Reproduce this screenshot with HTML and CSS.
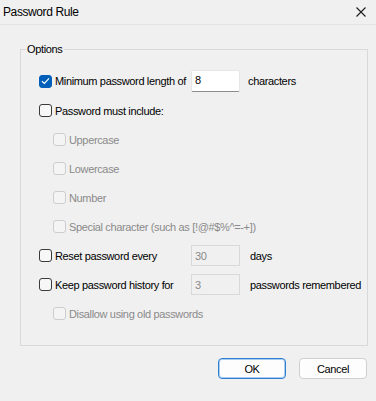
FILE: index.html
```html
<!DOCTYPE html>
<html>
<head>
<meta charset="utf-8">
<link rel="stylesheet" href="styles.css">
</head>
<body>
<div class="window">
  <div class="titlebar">
    <span class="title">Password Rule</span>
    <svg class="close" width="10" height="10" viewBox="0 0 10 10"><path d="M0.5 0.5 L9.5 9.5 M9.5 0.5 L0.5 9.5" stroke="#1b1b1b" stroke-width="1.1" fill="none"/></svg>
  </div>
  <fieldset class="group">
    <legend class="legend">Options</legend>
    <div class="rows">
      <div class="row row-first">
        <div class="label-col">
          <span class="box checked"><svg width="9" height="8" viewBox="0 0 9 8"><path d="M1 4.2 L3.4 6.4 L8 1.4" stroke="#fff" stroke-width="1.2" fill="none"/></svg></span>
          <span class="text">Minimum password length of</span>
        </div>
        <div class="edit edit-active">8</div>
        <span class="text after">characters</span>
      </div>
      <div class="row">
        <span class="box"></span>
        <span class="text">Password must include:</span>
      </div>
      <div class="row sub disabled">
        <span class="box"></span>
        <span class="text">Uppercase</span>
      </div>
      <div class="row sub disabled">
        <span class="box"></span>
        <span class="text">Lowercase</span>
      </div>
      <div class="row sub disabled">
        <span class="box"></span>
        <span class="text">Number</span>
      </div>
      <div class="row sub disabled">
        <span class="box"></span>
        <span class="text">Special character (such as [!@#$%^=-+])</span>
      </div>
      <div class="row">
        <div class="label-col">
          <span class="box"></span>
          <span class="text">Reset password every</span>
        </div>
        <div class="edit edit-disabled">30</div>
        <span class="text after2">days</span>
      </div>
      <div class="row">
        <div class="label-col">
          <span class="box"></span>
          <span class="text">Keep password history for</span>
        </div>
        <div class="edit edit-disabled">3</div>
        <span class="text after2">passwords remembered</span>
      </div>
      <div class="row sub disabled">
        <span class="box"></span>
        <span class="text">Disallow using old passwords</span>
      </div>
    </div>
  </fieldset>
  <div class="buttons">
    <div class="btn btn-default">OK</div>
    <div class="btn">Cancel</div>
  </div>
</div>
</body>
</html>
```
FILE: styles.css
```css
html, body {
  margin: 0;
  padding: 0;
  background: #f0f0f0;
}
body {
  font-family: "Liberation Sans", Arial, sans-serif;
  font-size: 11px;
  letter-spacing: -0.35px;
  color: #000;
}
.window {
  width: 376px;
  height: 401px;
  background: #f0f0f0;
}
.titlebar {
  height: 24px;
  border-bottom: 1px solid #e3e3e3;
  display: flex;
  align-items: center;
  justify-content: space-between;
  padding: 0 10px 0 3px;
}
.title {
  font-size: 12px;
  letter-spacing: -0.4px;
  color: #000;
  padding-bottom: 1px;
}
.close {
  display: block;
  margin-top: -1px;
}
.group {
  margin: 17px 0 0 20px;
  width: 348px;
  box-sizing: border-box;
  border: 1px solid #d9d9d9;
  padding: 0;
  min-width: 0;
}
.legend {
  margin-left: 5px;
  padding: 0 2px 0 1px;
  line-height: 14px;
  height: 14px;
}
.rows {
  padding: 10px 0 17px 18px;
  display: flex;
  flex-direction: column;
}
.row {
  display: flex;
  align-items: center;
  height: 29px;
}
.row-first {
  height: 30px;
}
.sub {
  padding-left: 14px;
}
.label-col {
  display: flex;
  align-items: center;
  width: 152px;
}
.box {
  width: 13px;
  height: 13px;
  box-sizing: border-box;
  border: 1px solid #3a3a3a;
  border-radius: 3px;
  background: #f7f7f7;
  margin-right: 3px;
  flex: none;
  display: flex;
  align-items: center;
  justify-content: center;
}
.box.checked {
  background: #005fb8;
  border-color: #005fb8;
}
.box svg {
  display: block;
}
.disabled .box {
  border-color: #cdcdcd;
  background: #f4f4f4;
}
.disabled .text {
  color: #8a8a8a;
}
.text {
  white-space: nowrap;
  line-height: 14px;
}
.edit {
  width: 49px;
  box-sizing: border-box;
  padding: 2px 0 0 3px;
  line-height: 14px;
  flex: none;
}
.edit-active {
  height: 22px;
  background: #fff;
  border: 1px solid #e6e6e6;
  border-bottom-color: #8c8c8c;
  border-radius: 2px;
}
.edit-disabled {
  height: 21px;
  padding-top: 3px;
  background: #f0f0f0;
  border: 1px solid #d9d9d9;
  color: #8a8a8a;
}
.after {
  margin-left: 8px;
}
.after2 {
  margin-left: 10px;
}
.buttons {
  display: flex;
  justify-content: flex-end;
  gap: 13px;
  margin-top: 12px;
  padding-right: 9px;
}
.btn {
  width: 68px;
  height: 21px;
  box-sizing: border-box;
  border: 1px solid #d0d0d0;
  border-radius: 4px;
  background: #fdfdfd;
  display: flex;
  align-items: center;
  justify-content: center;
  line-height: 14px;
}
.btn-default {
  border: 1px solid #2f7fd0;
  box-shadow: inset 0 0 0 1px #a9cdf0;
}
```
